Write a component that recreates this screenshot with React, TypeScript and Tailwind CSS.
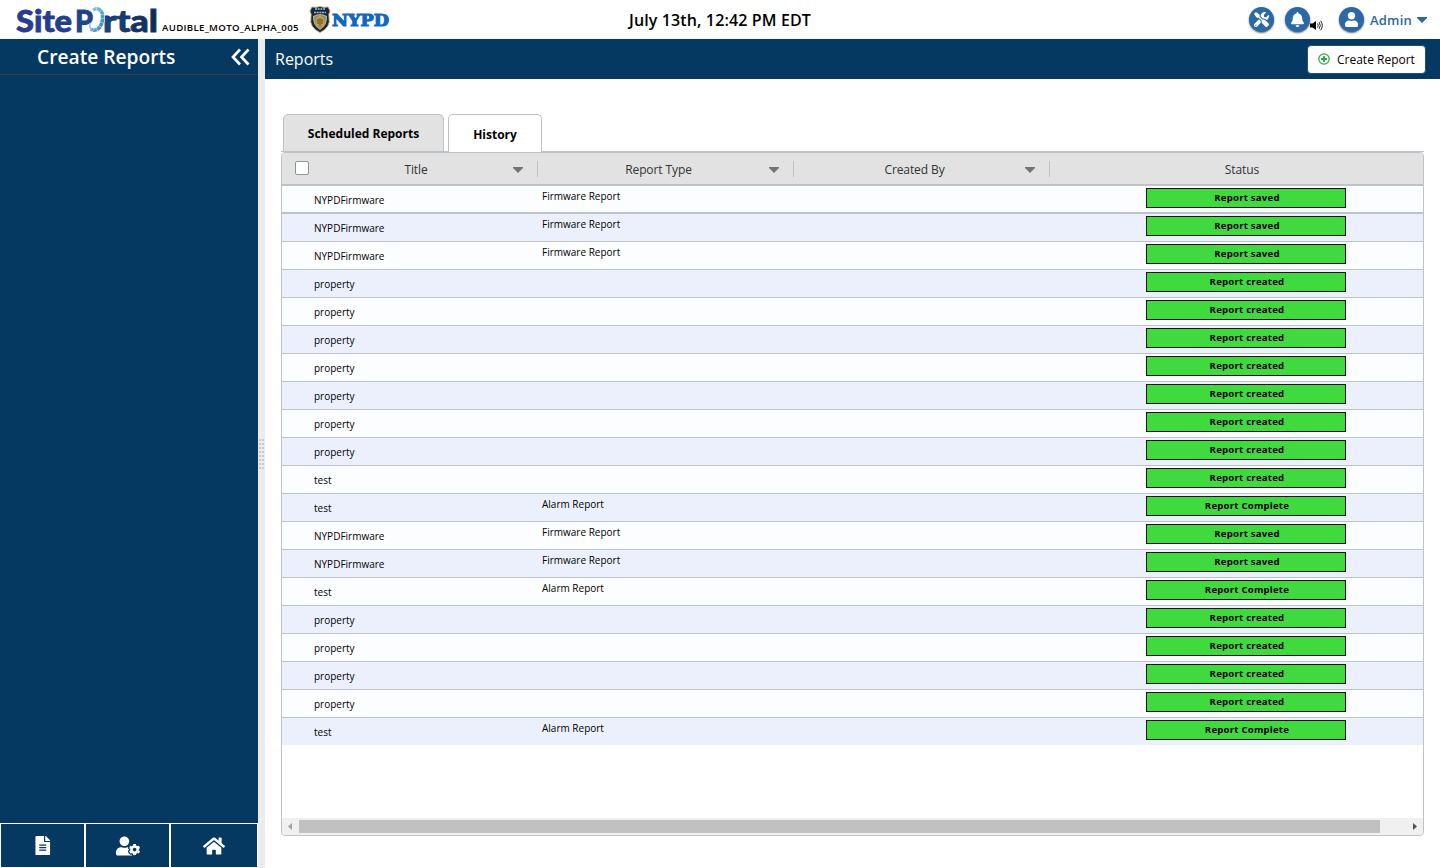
import React from "react";
import { FaBell, FaFileAlt, FaHome, FaTools, FaUser, FaUserCog } from "react-icons/fa";

type Row = { title: string; type?: string; status: string };

const saved: Row = { title: "NYPDFirmware", type: "Firmware Report", status: "Report saved" };
const created: Row = { title: "property", status: "Report created" };
const alarm: Row = { title: "test", type: "Alarm Report", status: "Report Complete" };

const rows: Row[] = [
  saved, saved, saved,
  created, created, created, created, created, created, created,
  { title: "test", status: "Report created" },
  alarm, saved, saved, alarm,
  created, created, created, created,
  alarm,
];

function Logo() {
  return (
    <svg className="block h-[39px] w-[146px]" viewBox="0 0 146 39">
      <defs>
        <linearGradient id="site" x1="0" x2="1">
          <stop offset="0" stopColor="#2c3a92" />
          <stop offset="1" stopColor="#20408a" />
        </linearGradient>
        <linearGradient id="rtal" x1="0" x2="1">
          <stop offset="0" stopColor="#1b4880" />
          <stop offset="1" stopColor="#0f2850" />
        </linearGradient>
        <linearGradient id="ring" x1="0" x2="1" y1="0" y2="1">
          <stop offset="0" stopColor="#8fcbe8" />
          <stop offset="1" stopColor="#2d86bd" />
        </linearGradient>
      </defs>
      <g fontFamily="Lato,'Open Sans',sans-serif" fontWeight="900" fontSize="30.5">
        <text x="1" y="31.5" textLength="56" lengthAdjust="spacingAndGlyphs" fill="url(#site)" stroke="#25408c" strokeWidth=".8">Site</text>
        <text x="60" y="31.5" textLength="18" lengthAdjust="spacingAndGlyphs" fill="#1f4489" stroke="#1f4489" strokeWidth=".8">P</text>
        <text x="88" y="31.5" textLength="55" lengthAdjust="spacingAndGlyphs" fill="url(#rtal)" stroke="#153766" strokeWidth=".8">rtal</text>
      </g>
      <path d="M77 10.5 Q84 6 87 13 Q89 22 84 28 Q81 31 77 31" fill="none" stroke="#fff" strokeWidth="4.5" />
      <path d="M78 10 Q84 6.5 87 13 Q89 22 84 28 Q80 32 76 29" fill="none" stroke="url(#ring)" strokeWidth="3.6" strokeDasharray="3.8 .4" />
      <path d="M76 29Q74 27 75 23" fill="none" stroke="#8fcbe8" strokeWidth="1.5" />
    </svg>
  );
}

function Badge() {
  return (
    <svg className="block h-[27px] w-[22px]" viewBox="0 0 22 27">
      <path d="M3 1 Q7 2 11 0.5 Q15 2 19 1 L21 5 Q19 8 20 12 Q22 21 11 26.5 Q0 21 2 12 Q3 8 1 5Z" fill="#14283f" stroke="#b5a468" strokeWidth=".8" />
      <path d="M6 3H16M5 6.5H17" stroke="#a9bac4" strokeWidth="1.4" strokeDasharray="2 .7" />
      <path d="M4 10Q11 6 18 10Q19 19 11 24Q3 19 4 10Z" fill="#c3a45c" />
      <path d="M5.5 11Q11 7.5 16.5 11Q17 18 11 22Q5 18 5.5 11Z" fill="#6f90a6" />
      <path d="M11 9L15 13V18L11 21L7 18V13Z" fill="#cfa23c" />
      <path d="M9 13V18M11 12V20M13 13V18" stroke="#3a3a30" strokeWidth=".9" />
    </svg>
  );
}

function Round({ children }: { children: React.ReactNode }) {
  return (
    <span className="flex size-[25px] shrink-0 items-center justify-center rounded-full bg-[#2a69a5] text-white shadow-[0_1px_2px_rgba(0,0,0,0.6)]">
      {children}
    </span>
  );
}

function Caret({ className }: { className: string }) {
  return (
    <svg className={className} viewBox="0 0 10 6">
      <path d="M0 0H10V1L5 6L0 1Z" fill="currentColor" />
    </svg>
  );
}

function Volume() {
  return (
    <svg className="mt-[12px] block h-[11px] w-[13px]" viewBox="0 0 13 11">
      <path d="M0 3.5H2.5L6 1V10L2.5 7.5H0Z" fill="#000" />
      <path d="M7.5 3.5Q9 5.5 7.5 7.5M9.2 2.2Q11.4 5.5 9.2 8.8M10.7 .8Q14 5.5 10.7 10.2" fill="none" stroke="#222" strokeWidth="1" />
    </svg>
  );
}

function Column({ label, sortable }: { label: string; sortable?: boolean }) {
  return (
    <div className="flex h-full items-center pt-px">
      <span className={sortable ? "flex-1 pl-[10px] pt-[2px] text-center" : "flex-1 pl-[11px] pt-px text-center"}>{label}</span>
      {sortable && (
        <>
          <Caret className="mr-[14px] mt-px h-[6px] w-[10px] text-[#747474]" />
          <span className="mb-px h-[16px] w-px bg-[#bdc3c7]" />
        </>
      )}
    </div>
  );
}

function Header() {
  return (
    <header className="grid h-[39px] shrink-0 grid-cols-3">
      <div className="flex items-start pl-[15px]">
        <Logo />
        <span className="ml-px mt-[21px] w-[137px] whitespace-nowrap text-[9.6px] font-semibold leading-[14px] tracking-[0.34px]">AUDIBLE_MOTO_ALPHA_005</span>
        <div className="ml-[10px] mt-[6px] flex items-center">
          <Badge />
          <svg className="block h-[24px] w-[60px]" viewBox="0 0 60 24">
            <text x="1" y="17.8" textLength="57" lengthAdjust="spacingAndGlyphs" fontFamily="'DejaVu Serif',serif" fontWeight="700" fontSize="17.5" fill="#1267c0" stroke="#1267c0" strokeWidth="1.2">NYPD</text>
          </svg>
        </div>
      </div>
      <div className="pt-[8px] text-center text-[16px] font-semibold leading-6 tracking-[0.13px]">July 13th, 12:42 PM EDT</div>
      <div className="flex items-center justify-end pr-[13px]">
        <Round><FaTools size={15} /></Round>
        <span className="w-[11px]" />
        <Round><FaBell size={15} /></Round>
        <Volume />
        <span className="w-[16px]" />
        <Round><FaUser size={15} /></Round>
        <span className="ml-1.5 mt-[2px] w-[43px] whitespace-nowrap text-[13px] font-semibold tracking-[0.2px] text-[#2a69a5]">Admin</span>
        <Caret className="ml-[4px] mt-px h-[6px] w-[10px] text-[#2a69a5]" />
      </div>
    </header>
  );
}

function Sidebar() {
  return (
    <aside className="flex w-[258px] shrink-0 flex-col bg-[#053961] text-white">
      <div className="flex h-[36px] items-center justify-between border-b border-[#363e45] pl-[37px] pr-[8px]">
        <h1 className="text-[19.2px] font-semibold leading-[30px]">Create Reports</h1>
        <svg className="h-[18px] w-[19px]" viewBox="0 0 19 18" fill="none" stroke="currentColor" strokeWidth="2.7">
          <path d="M9 1.5L2 9L9 16.5M17.5 1.5L10.5 9L17.5 16.5" />
        </svg>
      </div>
      <div className="flex-1" />
      <div className="grid h-[45px] grid-cols-[85px_85px_88px] border-b border-white">
        {[FaFileAlt, FaUserCog, FaHome].map((Icon, i) => (
          <button key={i} className="flex items-center justify-center border border-b-0 border-white">
            <Icon size={i === 0 ? 19.5 : i === 1 ? 24 : 22} />
          </button>
        ))}
      </div>
    </aside>
  );
}

function ReportTable() {
  return (
    <div className="flex min-h-0 flex-1 flex-col overflow-hidden rounded-[4px] border border-[#bdc3c7]">
      <div className="grid h-[33px] shrink-0 grid-cols-[256px_256px_256px_1fr] border-b-2 border-[#bdc3c7] bg-[#e2e2e2] text-[12px] font-medium tracking-[-0.1px] text-[#333]">
        <div className="flex">
          <input type="checkbox" className="ml-[13px] mt-[8px] size-[14px] appearance-none rounded-[2px] border border-[#8b9494] bg-white" />
          <div className="flex-1"><Column label="Title" sortable /></div>
        </div>
        <Column label="Report Type" sortable />
        <Column label="Created By" sortable />
        <Column label="Status" />
      </div>
      <div className="flex-1">
        {rows.map((row, i) => (
          <div
            key={i}
            className={`grid grid-cols-[256px_256px_256px_1fr] border-[#bdc3c7] text-[10px] leading-[14px] text-black ${i % 2 ? "bg-[#ecf0fd]" : "bg-[#fcfdff]"} ${i === 0 ? "h-[28px] border-b-2" : i === 19 ? "h-[27px]" : "h-[28px] border-b"}`}
          >
            <div className="pl-8 pt-[7px]">{row.title}</div>
            <div className="pl-1 pt-[3px]">{row.type}</div>
            <div />
            <div className="pl-[96px] pt-[2px]">
              <div className="h-[20px] w-[200px] border border-[#111] bg-[#40d93e] pl-[2px] pt-[2px] text-center text-[9.6px] font-bold leading-[14px] tracking-[0.22px]">{row.status}</div>
            </div>
          </div>
        ))}
      </div>
      <div className="flex h-[17px] shrink-0 items-center bg-[#f0f0f0] pl-[6px] pr-[6px]">
        <svg className="h-[7px] w-[4px]" viewBox="0 0 4 7"><path d="M4 0L0 3.5L4 7Z" fill="#a3a3a3" /></svg>
        <span className="ml-[7px] h-[13px] w-[1081px] bg-[#c1c1c1]" />
        <svg className="ml-auto h-[7px] w-[4px]" viewBox="0 0 4 7"><path d="M0 0L4 3.5L0 7Z" fill="#505050" /></svg>
      </div>
    </div>
  );
}

export default function App() {
  return (
    <div className="flex h-[868px] w-[1440px] flex-col overflow-hidden bg-white font-['Open_Sans','Noto_Sans',sans-serif] text-black">
      <Header />
      <div className="flex min-h-0 flex-1">
        <Sidebar />
        <div className="flex w-[7px] shrink-0 flex-col items-start justify-center bg-[#ececec]">
          <div className="ml-px grid grid-cols-[2px_2px] gap-x-px gap-y-[2px]">
            {Array.from({ length: 16 }, (_, i) => <i key={i} className="size-[2px] bg-[#c9c9c9]" />)}
          </div>
        </div>
        <main className="flex min-w-0 flex-1 flex-col">
          <div className="flex h-[40px] shrink-0 items-center justify-between bg-[#053961] pl-[10px] pr-[14px]">
            <h2 className="text-[16px] leading-6 text-white">Reports</h2>
            <button className="flex h-[29px] w-[119px] items-center rounded-[4px] border border-[#254d70] bg-white pl-[10px] text-[12px] text-black">
              <svg className="mr-[7px] size-[12px]" viewBox="0 0 12 12" fill="none" stroke="#28a745" strokeWidth="1.2">
                <circle cx="6" cy="6" r="5.2" />
                <path d="M6 3V9M3 6H9" strokeWidth="1.8" />
              </svg>
              <span className="pt-[2px]">Create Report</span>
            </button>
          </div>
          <section className="flex min-h-0 flex-1 flex-col pb-8 pl-4 pr-4 pt-[35px]">
            <div className="flex h-[38px] shrink-0 gap-1 border-b border-[#bdc3c7] pl-[2px] text-[12px] font-bold">
              <div className="flex h-[38px] w-[161px] items-center justify-center rounded-t-[5px] border border-[#bdc3c7] bg-[#e2e2e2] pt-[2px]">Scheduled Reports</div>
              <div className="flex h-[38px] w-[94px] items-center justify-center rounded-t-[5px] border border-b-0 border-[#bdc3c7] bg-white pt-[3px]">History</div>
            </div>
            <ReportTable />
          </section>
        </main>
      </div>
    </div>
  );
}
